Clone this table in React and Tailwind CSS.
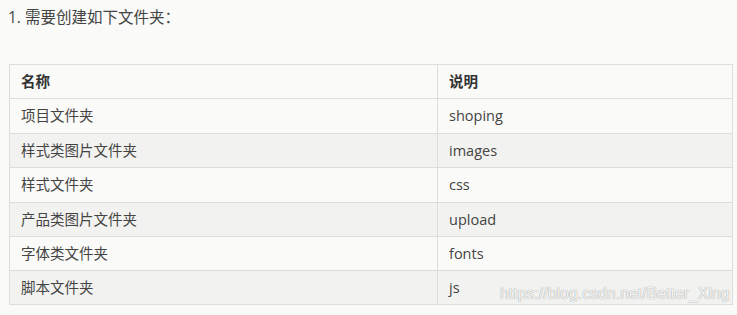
import React from 'react';

const rows = [
  ['项目文件夹', 'shoping'],
  ['样式类图片文件夹', 'images'],
  ['样式文件夹', 'css'],
  ['产品类图片文件夹', 'upload'],
  ['字体类文件夹', 'fonts'],
  ['脚本文件夹', 'js'],
];

const App = () => {
  return (
    <div
      className="relative w-[737px] h-[315px] bg-[#fafaf8] text-[#333] overflow-hidden"
      style={{ fontFamily: '"Open Sans", "Noto Sans CJK SC", sans-serif' }}
    >
      <p className="pl-[8px] pt-[5px] text-[15.5px] leading-[24px] text-[#444]">1. 需要创建如下文件夹：</p>

      <table className="ml-[9px] mt-[35px] w-[724px] border-collapse text-[14.5px] text-[#444]">
        <thead>
          <tr className="h-[34px]">
            <th className="w-[428px] border border-[#ddd] pl-[11px] text-left font-bold text-[#333]">名称</th>
            <th className="border border-[#ddd] pl-[11px] text-left font-bold text-[#333]">说明</th>
          </tr>
        </thead>
        <tbody>
          {rows.map(([name, desc], i) => (
            <tr
              key={name}
              className={i % 2 === 1 ? 'h-[34px] bg-[#f2f2f0]' : i === 4 ? 'h-[34px]' : 'h-[35px]'}
            >
              <td className="border border-[#ddd] pl-[11px]">{name}</td>
              <td className="border border-[#ddd] pl-[11px]">{desc}</td>
            </tr>
          ))}
        </tbody>
      </table>

      <span
        className="absolute left-[500px] top-[284px] text-[15.9px] leading-[20px] text-white/90 whitespace-nowrap"
        style={{
          fontFamily: '"Liberation Sans", sans-serif',
          textShadow: '0 0 1px rgba(0,0,0,0.35), 0 0 1px rgba(0,0,0,0.2)',
        }}
      >
        https://blog.csdn.net/Better_Xing
      </span>
    </div>
  );
};

export default App;
